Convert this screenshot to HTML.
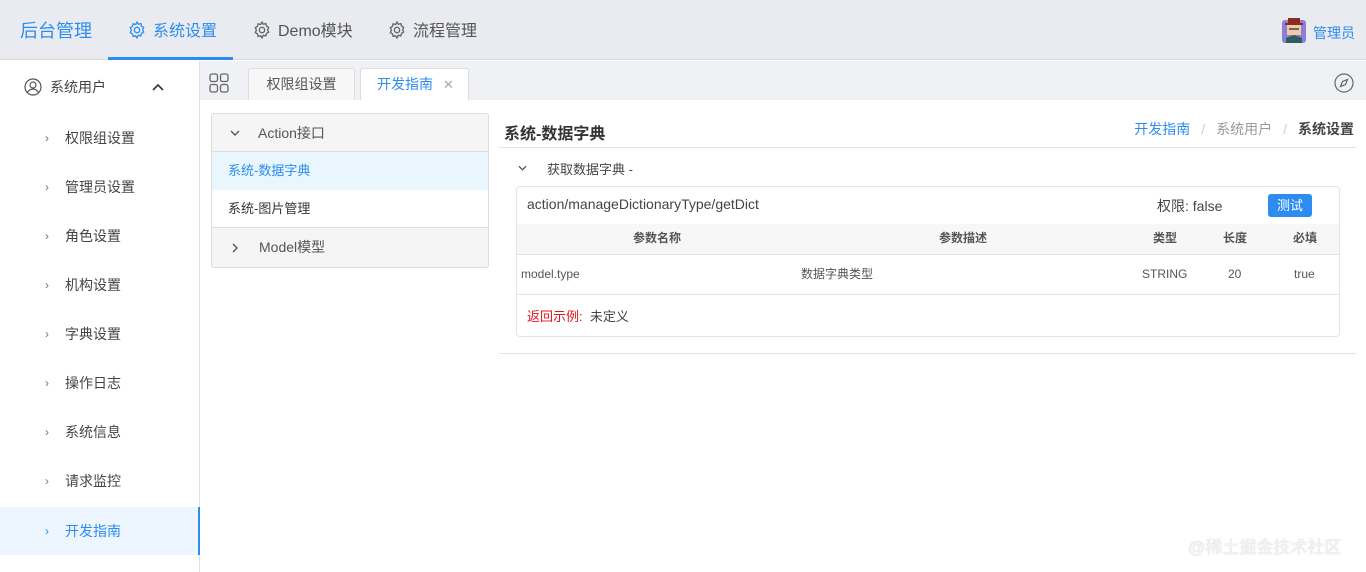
<!DOCTYPE html>
<html><head><meta charset="utf-8"><style>
*{margin:0;padding:0;box-sizing:border-box}
body{width:1366px;height:572px;overflow:hidden;background:#fff;font-family:"Liberation Sans","Noto Sans CJK SC",sans-serif;color:#333;position:relative;font-size:14px}
.a{position:absolute;white-space:nowrap}
.hdr{left:0;top:0;width:1366px;height:60px;background:#e9ebf0;border-bottom:1px solid #d6d8dd}
.side{left:0;top:61px;width:200px;height:511px;background:#fff;border-right:1px solid #e2e2e2}
.mi{left:0;width:199px;height:48px;line-height:48px;font-size:14px;color:#444}
.mi span.c{position:absolute;left:45px;color:#777;font-size:12px}
.mi span.t{position:absolute;left:65px}
.tabbar{left:200px;top:61px;width:1166px;height:39px;background:#f0f1f4}
.tab{top:68px;height:32px;background:#f7f7f8;border:1px solid #ddd;border-bottom:none;border-radius:3px 3px 0 0;line-height:30px;text-align:center;font-size:14px;color:#555}
.gear{width:20px;height:20px}
</style></head><body>
<div class="a hdr"></div>
<div class="a" style="left:20px;top:17px;font-size:18px;color:#2d8cf0">后台管理</div>
<div class="a" style="left:108px;top:57px;width:125px;height:3px;background:#2d8cf0"></div>
<svg class="a gear" style="left:127px;top:20px" viewBox="0 0 24 24" fill="none" stroke="#2d8cf0" stroke-width="1.6"><circle cx="12" cy="12" r="3.2"/><path d="M12 2.5l1.6 2.6 3-.8.8 3 2.6 1.6-1.3 2.8 1.3 2.8-2.6 1.6-.8 3-3-.8L12 21.5l-1.6-2.6-3 .8-.8-3-2.6-1.6L5.3 12 4 9.2l2.6-1.6.8-3 3 .8z"/></svg>
<div class="a" style="left:153px;top:17px;font-size:16px;color:#2d8cf0">系统设置</div>
<svg class="a gear" style="left:252px;top:20px" viewBox="0 0 24 24" fill="none" stroke="#666" stroke-width="1.6"><circle cx="12" cy="12" r="3.2"/><path d="M12 2.5l1.6 2.6 3-.8.8 3 2.6 1.6-1.3 2.8 1.3 2.8-2.6 1.6-.8 3-3-.8L12 21.5l-1.6-2.6-3 .8-.8-3-2.6-1.6L5.3 12 4 9.2l2.6-1.6.8-3 3 .8z"/></svg>
<div class="a" style="left:278px;top:17px;font-size:16px;color:#555">Demo模块</div>
<svg class="a gear" style="left:387px;top:20px" viewBox="0 0 24 24" fill="none" stroke="#666" stroke-width="1.6"><circle cx="12" cy="12" r="3.2"/><path d="M12 2.5l1.6 2.6 3-.8.8 3 2.6 1.6-1.3 2.8 1.3 2.8-2.6 1.6-.8 3-3-.8L12 21.5l-1.6-2.6-3 .8-.8-3-2.6-1.6L5.3 12 4 9.2l2.6-1.6.8-3 3 .8z"/></svg>
<div class="a" style="left:413px;top:17px;font-size:16px;color:#555">流程管理</div>
<svg class="a" style="left:1282px;top:17px" width="24" height="26" viewBox="0 0 24 26"><rect x="0" y="3" width="24" height="23" rx="3" fill="#8b7fd6"/><rect x="5" y="6" width="14" height="12" fill="#f1c9a5"/><path d="M3 8h18v-2h-3v-5h-12v5h-3z" fill="#8b2a22"/><path d="M4 26v-5l8-3 8 3v5z" fill="#2e5d60"/><rect x="7" y="11" width="10" height="2" fill="#666"/></svg>
<div class="a" style="left:1313px;top:23px;font-size:14px;color:#2d8cf0">管理员</div>

<div class="a side"></div>
<svg class="a" style="left:24px;top:78px" width="18" height="18" viewBox="0 0 18 18" fill="none" stroke="#555" stroke-width="1.2"><circle cx="9" cy="9" r="8"/><circle cx="9" cy="7" r="3"/><path d="M3.5 14.5c1.5-2.5 3.5-3.5 5.5-3.5s4 1 5.5 3.5"/></svg>
<div class="a" style="left:50px;top:77px;font-size:14px;color:#444">系统用户</div>
<svg class="a" style="left:152px;top:83px" width="12" height="8" viewBox="0 0 12 8" fill="none" stroke="#333" stroke-width="1.6"><path d="M1 7l5-5 5 5"/></svg>
<div class="a mi" style="top:114px"><span class="c">›</span><span class="t">权限组设置</span></div>
<div class="a mi" style="top:163px"><span class="c">›</span><span class="t">管理员设置</span></div>
<div class="a mi" style="top:212px"><span class="c">›</span><span class="t">角色设置</span></div>
<div class="a mi" style="top:261px"><span class="c">›</span><span class="t">机构设置</span></div>
<div class="a mi" style="top:310px"><span class="c">›</span><span class="t">字典设置</span></div>
<div class="a mi" style="top:359px"><span class="c">›</span><span class="t">操作日志</span></div>
<div class="a mi" style="top:408px"><span class="c">›</span><span class="t">系统信息</span></div>
<div class="a mi" style="top:457px"><span class="c">›</span><span class="t">请求监控</span></div>
<div class="a mi" style="top:507px;background:#edf6ff;color:#2d8cf0;border-right:2px solid #2d8cf0;width:200px"><span class="c" style="color:#2d8cf0">›</span><span class="t">开发指南</span></div>

<div class="a tabbar"></div>
<svg class="a" style="left:209px;top:73px" width="20" height="20" viewBox="0 0 20 20" fill="none" stroke="#666" stroke-width="1.3"><rect x="1" y="1" width="7.5" height="7.5" rx="2"/><rect x="11.5" y="1" width="7.5" height="7.5" rx="2"/><rect x="1" y="11.5" width="7.5" height="7.5" rx="2"/><rect x="11.5" y="11.5" width="7.5" height="7.5" rx="2"/></svg>
<div class="a tab" style="left:248px;width:107px">权限组设置</div>
<div class="a tab" style="left:360px;width:109px;background:#fff;color:#2d8cf0;text-align:left;padding-left:16px">开发指南<span style="color:#aaa;margin-left:10px;font-size:13px">✕</span></div>
<svg class="a" style="left:1334px;top:73px" width="20" height="20" viewBox="0 0 20 20" fill="none" stroke="#666" stroke-width="1.2"><circle cx="10" cy="10" r="9"/><path d="M13.5 6.5l-2 5-5 2 2-5z"/></svg>

<div class="a" style="left:211px;top:113px;width:278px;height:155px;border:1px solid #ddd;border-radius:3px;overflow:hidden">
 <div style="height:38px;background:#f5f5f5;border-bottom:1px solid #ddd;line-height:38px;font-size:14px;color:#555;position:relative"><svg style="position:absolute;left:18px;top:16px" width="10" height="6" viewBox="0 0 10 6" fill="none" stroke="#555" stroke-width="1.4"><path d="M1 1l4 4 4-4"/></svg><span style="position:absolute;left:46px">Action接口</span></div>
 <div style="height:38px;background:#eaf6fd;line-height:38px;color:#2d8cf0;padding-left:16px;font-size:13px">系统-数据字典</div>
 <div style="height:38px;line-height:38px;color:#333;padding-left:16px;font-size:13px;border-bottom:1px solid #ddd">系统-图片管理</div>
 <div style="height:39px;background:#f5f5f5;line-height:39px;font-size:14px;color:#555;position:relative"><svg style="position:absolute;left:20px;top:15px" width="6" height="10" viewBox="0 0 6 10" fill="none" stroke="#555" stroke-width="1.4"><path d="M1 1l4 4-4 4"/></svg><span style="position:absolute;left:47px">Model模型</span></div>
</div>

<div class="a" style="left:504px;top:120px;font-size:16px;font-weight:bold;color:#333">系统-数据字典</div>
<div class="a" style="right:12px;top:119px;font-size:14px;color:#2d8cf0">开发指南<span style="color:#ccc;margin:0 11px">/</span><span style="color:#999">系统用户</span><span style="color:#ccc;margin:0 11px">/</span><b style="color:#444">系统设置</b></div>
<div class="a" style="left:499px;top:147px;width:857px;height:1px;background:#e4e4e4"></div>
<svg class="a" style="left:518px;top:165px" width="9" height="6" viewBox="0 0 10 6" fill="none" stroke="#555" stroke-width="1.4"><path d="M1 1l4 4 4-4"/></svg>
<div class="a" style="left:547px;top:159px;font-size:13px;color:#444">获取数据字典 -</div>

<div class="a" style="left:516px;top:186px;width:824px;height:151px;border:1px solid #e4e4e4;border-radius:4px;overflow:hidden">
 <div style="position:absolute;left:10px;top:9px;font-size:14px;color:#444">action/manageDictionaryType/getDict</div>
 <div style="position:absolute;left:640px;top:9px;font-size:14px;color:#444">权限: false</div>
 <div style="position:absolute;left:751px;top:7px;width:44px;height:23px;background:#2d8cf0;border-radius:3px;color:#fff;font-size:13px;line-height:23px;text-align:center">测试</div>
 <div style="position:absolute;left:0;top:37px;width:824px;height:31px;background:#f7f7f7;border-bottom:1px solid #e4e4e4;font-size:12px;font-weight:bold;color:#555;line-height:29px">
  <span style="position:absolute;left:116px">参数名称</span><span style="position:absolute;left:422px">参数描述</span><span style="position:absolute;left:636px">类型</span><span style="position:absolute;left:706px">长度</span><span style="position:absolute;left:776px">必填</span>
 </div>
 <div style="position:absolute;left:0;top:68px;width:824px;height:40px;border-bottom:1px solid #e4e4e4;font-size:12px;color:#555;line-height:38px">
  <span style="position:absolute;left:4px">model.type</span><span style="position:absolute;left:284px">数据字典类型</span><span style="position:absolute;left:625px">STRING</span><span style="position:absolute;left:711px">20</span><span style="position:absolute;left:777px">true</span>
 </div>
 <div style="position:absolute;left:10px;top:119px;font-size:13px;color:#444"><span style="color:#e4141e">返回示例:</span>&nbsp; 未定义</div>
</div>
<div class="a" style="left:499px;top:353px;width:857px;height:1px;background:#e4e4e4"></div>
<div class="a" style="left:1188px;top:533px;font-size:17px;color:#f4f4f4;text-shadow:0 0 1px #bbb">@稀土掘金技术社区</div>
</body></html>
